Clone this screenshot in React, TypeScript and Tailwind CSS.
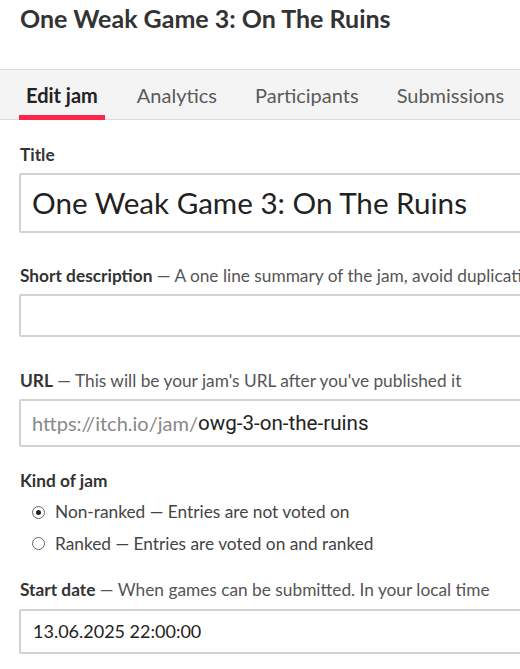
const tabs = ['Edit jam', 'Analytics', 'Participants', 'Submissions'];

const Label = ({ title, hint }: { title: string; hint?: string }) => (
    <div className="whitespace-nowrap text-[17.3px] leading-[22px] text-[#333]">
        <span className="font-bold">{title}</span>
        {hint && <span className="text-[#555]"> — {hint}</span>}
    </div>
);

const Radio = ({ checked, label }: { checked?: boolean; label: string }) => (
    <label className="flex items-center gap-[10px] text-[17.3px] leading-[22px] text-[#444] whitespace-nowrap">
        <span className="w-[13px] h-[13px] rounded-full border border-[#666] flex items-center justify-center">
            {checked && <span className="w-[5px] h-[5px] rounded-full bg-[#222]" />}
        </span>
        {label}
    </label>
);

export default function App() {
    return (
        <div className="w-[520px] h-[669px] overflow-hidden bg-white font-['Lato','Noto_Sans',sans-serif] text-[#333]">
            {/* Header */}
            <h1 className="px-[20px] pt-[3px] h-[69px] text-[25px] leading-[30px] font-bold text-[#333] whitespace-nowrap">
                One Weak Game 3: On The Ruins
            </h1>

            {/* Tabs */}
            <nav className="h-[51px] bg-[#f4f4f4] border-y border-[#dcdcdc] flex px-[19px] whitespace-nowrap">
                {tabs.map((t, i) => (
                    <div
                        key={t}
                        className={`relative flex items-center h-full text-[20px] ${i === 0 ? 'font-bold text-[#222] px-[7px] mr-[24px]' : 'text-[#5a5a5a] px-[8px] mr-[22px]'}`}
                    >
                        {t}
                        {i === 0 && <div className="absolute left-0 right-0 bottom-[-1px] h-[5px] bg-[#ff2449]" />}
                    </div>
                ))}
            </nav>

            {/* Form */}
            <div className="px-[19px] pt-[24px] flex flex-col">
                <div className="pl-[1px]">
                    <Label title="Title" />
                </div>
                <div className="mt-[7px] w-[560px] h-[60px] border-2 border-[#d2d2d2] rounded-[2px] flex items-center px-[11px] text-[29.6px] text-[#222] whitespace-nowrap">
                    One Weak Game 3: On The Ruins
                </div>

                <div className="mt-[32px] pl-[1px]">
                    <Label title="Short description" hint="A one line summary of the jam, avoid duplicating the title" />
                </div>
                <div className="mt-[7px] w-[560px] h-[43px] border-2 border-[#d2d2d2] rounded-[2px]" />

                <div className="mt-[33px] pl-[1px]">
                    <Label title="URL" hint="This will be your jam's URL after you've published it" />
                </div>
                <div className="mt-[7px] w-[560px] h-[48px] border-2 border-[#d2d2d2] rounded-[2px] flex items-center px-[11px] whitespace-nowrap">
                    <span className="text-[20px] text-[#888]">https://itch.io/jam/</span>
                    <span className="text-[20.6px] text-[#222] font-['Roboto',sans-serif]">owg-3-on-the-ruins</span>
                </div>

                <div className="mt-[23px] pl-[1px]">
                    <Label title="Kind of jam" />
                </div>
                <div className="mt-[9px] pl-[13px] flex flex-col gap-[9.5px]">
                    <Radio checked label="Non-ranked — Entries are not voted on" />
                    <Radio label="Ranked — Entries are voted on and ranked" />
                </div>

                <div className="mt-[24px] pl-[1px]">
                    <Label title="Start date" hint="When games can be submitted. In your local time" />
                </div>
                <div className="mt-[8px] w-[560px] h-[45px] border-2 border-[#d2d2d2] rounded-[2px] flex items-center px-[12px] text-[18px] text-[#222]">
                    13.06.2025 22:00:00
                </div>
            </div>
        </div>
    );
}
